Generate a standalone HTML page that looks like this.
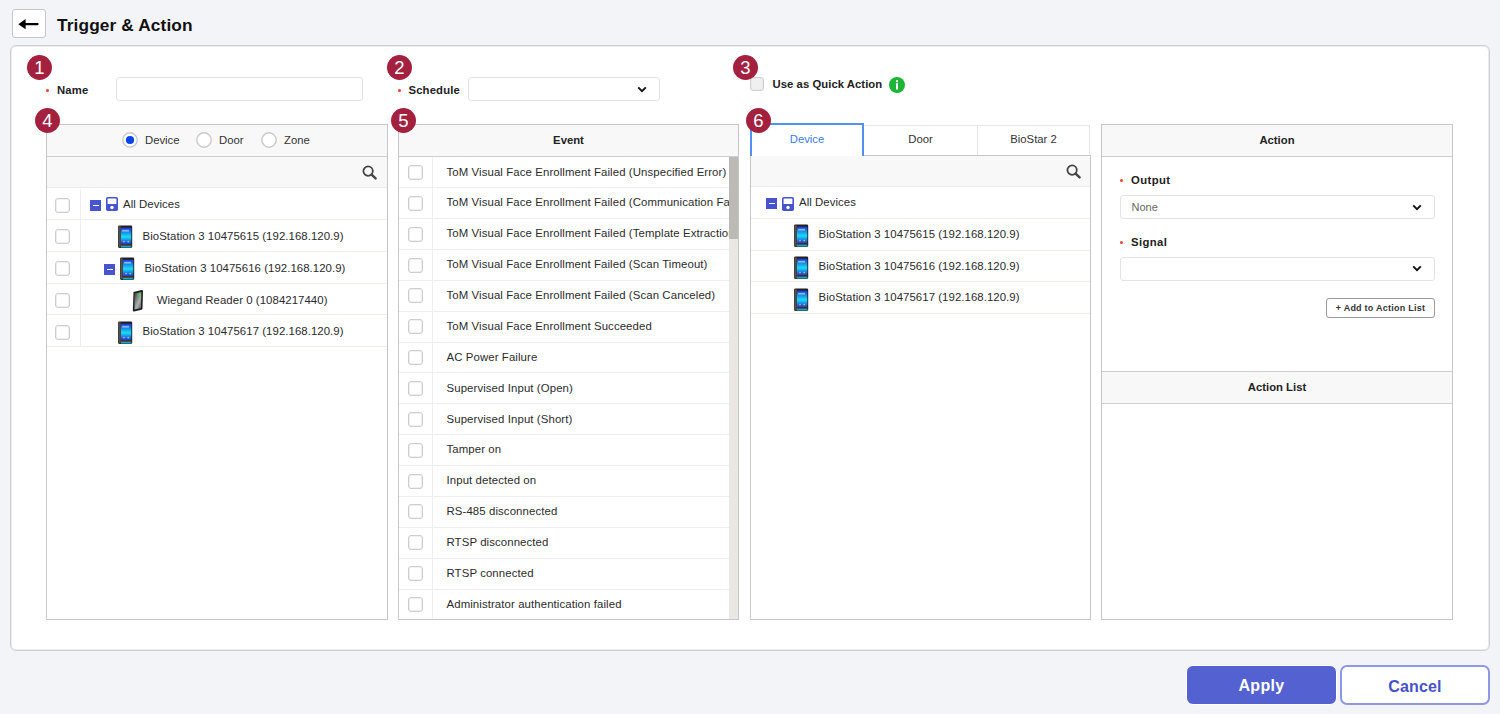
<!DOCTYPE html><html><head><meta charset="utf-8"><style>
*{margin:0;padding:0;box-sizing:border-box}
html,body{width:1500px;height:714px;overflow:hidden;background:#f3f4f8;font-family:"Liberation Sans", sans-serif;position:relative}
div,svg,span{position:absolute}
.back{left:12px;top:9px;width:34px;height:29px;background:#fff;border:1px solid #c6c6c6;border-radius:3px}
.title{left:57px;top:13px;font-size:17.3px;font-weight:bold;color:#111;line-height:24px;white-space:nowrap;letter-spacing:0.12px}
.panel{left:10px;top:45px;width:1480px;height:606px;background:#fff;border:1px solid #cdcdcf;border-radius:6px;box-shadow:inset 0 0 0 1px #ececec}
.num{width:25px;height:25px;border-radius:50%;background:#a3213f;color:#fff;font-size:18.5px;line-height:25.5px;text-align:center;z-index:5}
.dot{width:3px;height:3px;border-radius:50%;background:#f5402c}
.lb{font-size:11.3px;font-weight:bold;color:#222;line-height:20px;white-space:nowrap;letter-spacing:0.15px}
.lb2{font-size:11.3px;font-weight:bold;color:#222;line-height:18px;white-space:nowrap;letter-spacing:0.4px}
.inp{background:#fff;border:1px solid #e3e3e3;border-radius:3px}
.none{left:11px;top:0;line-height:22px;font-size:11px;color:#666;white-space:nowrap}
.cb{width:15px;height:15px;border:1px solid #cdcdcd;border-radius:3px;background:#fff;box-shadow:inset 0 0 0 0.6px #e4e4e4}
.info{width:16px;height:16px;border-radius:50%;background:#1ab83a;color:#fff;font-weight:bold;font-size:11px;line-height:16px;text-align:center}
.box{border:1px solid #c6c6c6;background:#fff}
.hdr{background:#f8f8f8}
.radio{width:15.5px;height:15.5px;border:1.5px solid #c9c9c9;border-radius:50%;background:#fff}
.rdot{left:2.2px;top:2.2px;width:8.2px;height:8.2px;border-radius:50%;background:#0544e6}
.rt{font-size:11.3px;color:#333;line-height:22px;white-space:nowrap}
.row{border-bottom:1px solid #efeee8;background:#fff}
.rowt{font-size:11.4px;color:#2b2b2b;white-space:nowrap;letter-spacing:0.06px}
.vdiv{width:1px;background:#efefef}
.minus{width:11px;height:11px;background:#4753cf}
.minus::after{content:'';position:absolute;left:2.5px;top:5px;width:6px;height:1px;background:#fff}
.ht{font-size:11.3px;font-weight:bold;color:#222;text-align:center;white-space:nowrap}
.erow{left:0;width:330px;border-bottom:1px solid #eeeeee;background:#fff}
.erow span{top:0.2px;font-size:11.4px;color:#2b2b2b;white-space:nowrap;letter-spacing:0.1px}
.tabt{height:31px;line-height:31px;text-align:center;font-size:11.3px;color:#333;white-space:nowrap}
.addbtn{left:1326px;top:298px;width:109px;height:20px;letter-spacing:0.25px;border:1px solid #9a9a9a;border-radius:3px;background:#fff;font-size:9px;font-weight:bold;color:#333;text-align:center;line-height:18px;white-space:nowrap}
.apply{left:1186px;top:665px;width:151px;height:40px;border:1px solid #fff;border-radius:7px;background:#5361d1;color:#fff;font-size:16px;font-weight:bold;text-align:center;line-height:40px;letter-spacing:0.3px}
.cancel{left:1340px;top:665px;width:150px;height:40px;border:2px solid #8e97e4;border-radius:7px;background:#fff;color:#4652c8;font-size:16px;font-weight:bold;text-align:center;line-height:40px;letter-spacing:0.15px}
</style></head><body><div class="back"><svg width="22" height="12" viewBox="0 0 22 12" style="position:absolute;left:4.8px;top:8.8px"><path d="M0.3 5.2 L7.6 0 L7.6 3.9 L19.6 3.9 Q20.6 3.9 20.6 5.1 Q20.6 6.3 19.6 6.3 L7.6 6.3 L7.6 10.2 Z" fill="#000"/></svg></div>
<div class="title">Trigger &amp; Action</div>
<div class="panel"></div>
<div class="dot" style="left:45.5px;top:88.5px"></div>
<div class="lb" style="left:57px;top:80px;">Name</div>
<div class="inp" style="left:116px;top:77px;width:247px;height:24px"></div>
<div class="dot" style="left:398px;top:88.5px"></div>
<div class="lb" style="left:408.5px;top:80px;">Schedule</div>
<div class="inp" style="left:468px;top:77px;width:192px;height:24px"></div>
<svg class="ic" style="left:637px;top:85.8px" width="10" height="7" viewBox="0 0 10 7"><path d="M1.2 1.3 L5 5.2 L8.8 1.3" fill="none" stroke="#111" stroke-width="1.9"/></svg>
<div class="cb" style="left:750px;top:77px;width:14px;height:14px;background:#f0f0f0;border-color:#cfcfcf"></div>
<div class="lb" style="left:772.5px;top:74px;letter-spacing:0.05px">Use as Quick Action</div>
<svg class="ic" style="left:889px;top:76.5px" width="16" height="16" viewBox="0 0 16 16"><circle cx="8" cy="8" r="8" fill="#1cb538"/><rect x="7" y="6.3" width="2" height="6.2" fill="#fff"/><rect x="7" y="3.3" width="2" height="1.9" fill="#fff"/></svg>
<div class="box" style="left:46px;top:124px;width:342px;height:496px"></div>
<div class="hdr" style="left:47px;top:125px;width:340px;height:32px;border-bottom:1px solid #cfcfcf"></div>
<div class="hdr" style="left:47px;top:157px;width:340px;height:31px;border-bottom:1px solid #ebebeb"></div>
<svg class="ic" style="left:122.25px;top:131.75px" width="16" height="16" viewBox="0 0 16 16"><circle cx="8" cy="8" r="7.2" fill="#fff" stroke="#c9c9c9" stroke-width="1.4"/><circle cx="8" cy="8" r="4.1" fill="#0544e6"/></svg>
<div class="rt" style="left:145px;top:129px;">Device</div>
<svg class="ic" style="left:195.75px;top:131.75px" width="16" height="16" viewBox="0 0 16 16"><circle cx="8" cy="8" r="7.2" fill="#fff" stroke="#c9c9c9" stroke-width="1.4"/></svg>
<div class="rt" style="left:219px;top:129px;">Door</div>
<svg class="ic" style="left:261.25px;top:131.75px" width="16" height="16" viewBox="0 0 16 16"><circle cx="8" cy="8" r="7.2" fill="#fff" stroke="#c9c9c9" stroke-width="1.4"/></svg>
<div class="rt" style="left:284px;top:129px;">Zone</div>
<svg class="ic" style="left:361.5px;top:164.5px" width="16" height="16" viewBox="0 0 16 16"><circle cx="6.1" cy="6.1" r="4.7" fill="none" stroke="#444" stroke-width="1.8"/><line x1="9.6" y1="9.6" x2="13.6" y2="13.4" stroke="#444" stroke-width="2.4" stroke-linecap="round"/></svg>
<div class="row" style="left:47px;top:189.40px;width:340px;height:30.75px"></div>
<div class="cb" style="left:55px;top:197.6px;background:#fff"></div>
<div class="minus" style="left:90px;top:200px"></div>
<svg class="ic" style="left:105.8px;top:197.2px" width="12" height="14" viewBox="0 0 12 14"><rect x="0" y="0" width="12" height="14" rx="1.8" fill="#4753cf"/><rect x="1.6" y="1.6" width="8.8" height="5.4" rx="0.3" fill="#fff"/><circle cx="6" cy="10.5" r="1.7" fill="#fff"/></svg>
<div class="rowt" style="left:123px;top:189.4px;line-height:30.75px">All Devices</div>
<div class="row" style="left:47px;top:221.15px;width:340px;height:30.75px"></div>
<div class="cb" style="left:55px;top:229.3px;background:#fff"></div>
<svg class="ic" style="left:118px;top:225.25px" width="15" height="24" viewBox="0 0 15 24"><defs><linearGradient id="scr" x1="0" y1="0" x2="0" y2="1"><stop offset="0" stop-color="#1836d8"/><stop offset="0.55" stop-color="#17dcf8"/><stop offset="1" stop-color="#1a30d0"/></linearGradient></defs><rect x="0" y="0.4" width="14.2" height="22.6" rx="1.4" fill="#241f1b"/><rect x="0.3" y="1.2" width="2.4" height="21" fill="#57504a"/><rect x="2.9" y="2.6" width="10.4" height="16.8" fill="url(#scr)"/><rect x="4.2" y="4.8" width="6.8" height="1.8" fill="#a8d4ff" opacity="0.75"/><circle cx="6" cy="16.6" r="0.95" fill="#f27ae4"/><circle cx="10.3" cy="16.6" r="0.95" fill="#80e040"/><rect x="2.9" y="19.4" width="10.4" height="1.2" fill="#6a2c18"/><rect x="2.9" y="20.6" width="10.4" height="2" fill="#17a8b8"/></svg>
<div class="rowt" style="left:142.5px;top:221.15px;line-height:30.75px">BioStation 3 10475615 (192.168.120.9)</div>
<div class="row" style="left:47px;top:252.90px;width:340px;height:30.75px"></div>
<div class="cb" style="left:55px;top:261.1px;background:#fff"></div>
<div class="minus" style="left:104px;top:263.5px"></div>
<svg class="ic" style="left:119.6px;top:257.0px" width="15" height="24" viewBox="0 0 15 24"><defs><linearGradient id="scr" x1="0" y1="0" x2="0" y2="1"><stop offset="0" stop-color="#1836d8"/><stop offset="0.55" stop-color="#17dcf8"/><stop offset="1" stop-color="#1a30d0"/></linearGradient></defs><rect x="0" y="0.4" width="14.2" height="22.6" rx="1.4" fill="#241f1b"/><rect x="0.3" y="1.2" width="2.4" height="21" fill="#57504a"/><rect x="2.9" y="2.6" width="10.4" height="16.8" fill="url(#scr)"/><rect x="4.2" y="4.8" width="6.8" height="1.8" fill="#a8d4ff" opacity="0.75"/><circle cx="6" cy="16.6" r="0.95" fill="#f27ae4"/><circle cx="10.3" cy="16.6" r="0.95" fill="#80e040"/><rect x="2.9" y="19.4" width="10.4" height="1.2" fill="#6a2c18"/><rect x="2.9" y="20.6" width="10.4" height="2" fill="#17a8b8"/></svg>
<div class="rowt" style="left:144.4px;top:252.9px;line-height:30.75px">BioStation 3 10475616 (192.168.120.9)</div>
<div class="row" style="left:47px;top:284.65px;width:340px;height:30.75px"></div>
<div class="cb" style="left:55px;top:292.8px;background:#fff"></div>
<svg class="ic" style="left:131.5px;top:288.65px" width="12" height="23" viewBox="0 0 12 23"><defs><linearGradient id="wg" x1="0" y1="0" x2="1" y2="1"><stop offset="0" stop-color="#3a3a3a"/><stop offset="0.6" stop-color="#aab2b2"/><stop offset="1" stop-color="#555"/></linearGradient></defs><path d="M1.5 3 L9.5 1 Q11 0.8 11 2 L10.5 19.5 Q10.5 20.5 9.5 20.8 L2 22.5 Q0.8 22.7 0.8 21.5 Z" fill="#1e1e1e"/><path d="M2.6 4.5 L9.3 3 L9 19 L2.4 20.6 Z" fill="url(#wg)"/><circle cx="7.4" cy="5.8" r="1.3" fill="#2ee82e"/></svg>
<div class="rowt" style="left:156.7px;top:284.65px;line-height:30.75px">Wiegand Reader 0 (1084217440)</div>
<div class="row" style="left:47px;top:316.40px;width:340px;height:30.75px"></div>
<div class="cb" style="left:55px;top:324.6px;background:#fff"></div>
<svg class="ic" style="left:117.8px;top:320.5px" width="15" height="24" viewBox="0 0 15 24"><defs><linearGradient id="scr" x1="0" y1="0" x2="0" y2="1"><stop offset="0" stop-color="#1836d8"/><stop offset="0.55" stop-color="#17dcf8"/><stop offset="1" stop-color="#1a30d0"/></linearGradient></defs><rect x="0" y="0.4" width="14.2" height="22.6" rx="1.4" fill="#241f1b"/><rect x="0.3" y="1.2" width="2.4" height="21" fill="#57504a"/><rect x="2.9" y="2.6" width="10.4" height="16.8" fill="url(#scr)"/><rect x="4.2" y="4.8" width="6.8" height="1.8" fill="#a8d4ff" opacity="0.75"/><circle cx="6" cy="16.6" r="0.95" fill="#f27ae4"/><circle cx="10.3" cy="16.6" r="0.95" fill="#80e040"/><rect x="2.9" y="19.4" width="10.4" height="1.2" fill="#6a2c18"/><rect x="2.9" y="20.6" width="10.4" height="2" fill="#17a8b8"/></svg>
<div class="rowt" style="left:142.5px;top:316.4px;line-height:30.75px">BioStation 3 10475617 (192.168.120.9)</div>
<div class="vdiv" style="left:80px;top:189px;height:157px"></div>
<div class="box" style="left:398px;top:124px;width:341px;height:496px"></div>
<div class="hdr" style="left:399px;top:125px;width:339px;height:32px;border-bottom:1px solid #cfcfcf"></div>
<div class="ht" style="left:399px;top:125px;width:339px;line-height:31px">Event</div>
<div style="position:absolute;left:399px;top:157px;width:330px;height:462px;overflow:hidden">
<div class="erow" style="top:0.40px;height:30.87px;line-height:29.87px"><div class="cb" style="left:9px;top:7.5px"></div><span style="left:47.5px">ToM Visual Face Enrollment Failed (Unspecified Error)</span></div>
<div class="erow" style="top:31.27px;height:30.87px;line-height:29.87px"><div class="cb" style="left:9px;top:7.5px"></div><span style="left:47.5px">ToM Visual Face Enrollment Failed (Communication Failure)</span></div>
<div class="erow" style="top:62.14px;height:30.87px;line-height:29.87px"><div class="cb" style="left:9px;top:7.5px"></div><span style="left:47.5px">ToM Visual Face Enrollment Failed (Template Extraction Failure)</span></div>
<div class="erow" style="top:93.01px;height:30.87px;line-height:29.87px"><div class="cb" style="left:9px;top:7.5px"></div><span style="left:47.5px">ToM Visual Face Enrollment Failed (Scan Timeout)</span></div>
<div class="erow" style="top:123.88px;height:30.87px;line-height:29.87px"><div class="cb" style="left:9px;top:7.5px"></div><span style="left:47.5px">ToM Visual Face Enrollment Failed (Scan Canceled)</span></div>
<div class="erow" style="top:154.75px;height:30.87px;line-height:29.87px"><div class="cb" style="left:9px;top:7.5px"></div><span style="left:47.5px">ToM Visual Face Enrollment Succeeded</span></div>
<div class="erow" style="top:185.62px;height:30.87px;line-height:29.87px"><div class="cb" style="left:9px;top:7.5px"></div><span style="left:47.5px">AC Power Failure</span></div>
<div class="erow" style="top:216.49px;height:30.87px;line-height:29.87px"><div class="cb" style="left:9px;top:7.5px"></div><span style="left:47.5px">Supervised Input (Open)</span></div>
<div class="erow" style="top:247.36px;height:30.87px;line-height:29.87px"><div class="cb" style="left:9px;top:7.5px"></div><span style="left:47.5px">Supervised Input (Short)</span></div>
<div class="erow" style="top:278.23px;height:30.87px;line-height:29.87px"><div class="cb" style="left:9px;top:7.5px"></div><span style="left:47.5px">Tamper on</span></div>
<div class="erow" style="top:309.10px;height:30.87px;line-height:29.87px"><div class="cb" style="left:9px;top:7.5px"></div><span style="left:47.5px">Input detected on</span></div>
<div class="erow" style="top:339.97px;height:30.87px;line-height:29.87px"><div class="cb" style="left:9px;top:7.5px"></div><span style="left:47.5px">RS-485 disconnected</span></div>
<div class="erow" style="top:370.84px;height:30.87px;line-height:29.87px"><div class="cb" style="left:9px;top:7.5px"></div><span style="left:47.5px">RTSP disconnected</span></div>
<div class="erow" style="top:401.71px;height:30.87px;line-height:29.87px"><div class="cb" style="left:9px;top:7.5px"></div><span style="left:47.5px">RTSP connected</span></div>
<div class="erow" style="top:432.58px;height:30.87px;line-height:29.87px"><div class="cb" style="left:9px;top:7.5px"></div><span style="left:47.5px">Administrator authentication failed</span></div>
</div>
<div class="vdiv" style="left:432px;top:157px;height:462px"></div>
<div style="position:absolute;left:729px;top:157px;width:9px;height:462px;background:#ebe7e5"></div>
<div style="position:absolute;left:729px;top:157px;width:9px;height:82px;background:#bcb9b6"></div>
<div class="box" style="left:750px;top:155px;width:341px;height:465px"></div>
<div style="position:absolute;left:863px;top:125px;width:227px;height:31px;background:#fff;border-top:1px solid #e6e6e6;border-right:1px solid #e6e6e6;border-bottom:1px solid #c6c6c6"></div>
<div style="position:absolute;left:977px;top:126px;width:1px;height:29px;background:#e6e6e6"></div>
<div style="position:absolute;left:750px;top:123px;width:114px;height:33px;background:#fff;border:2px solid #5390f4;border-bottom:none"></div>
<div class="tabt" style="left:751px;top:124px;width:112px;color:#3b7de8">Device</div>
<div class="tabt" style="left:864px;top:124px;width:113px">Door</div>
<div class="tabt" style="left:978px;top:124px;width:111px">BioStar 2</div>
<div class="hdr" style="left:751px;top:156px;width:339px;height:31px;border-bottom:1px solid #ebebeb"></div>
<svg class="ic" style="left:1065.5px;top:163.5px" width="16" height="16" viewBox="0 0 16 16"><circle cx="6.1" cy="6.1" r="4.7" fill="none" stroke="#444" stroke-width="1.8"/><line x1="9.6" y1="9.6" x2="13.6" y2="13.4" stroke="#444" stroke-width="2.4" stroke-linecap="round"/></svg>
<div class="row" style="left:751px;top:188.00px;width:339px;height:30.75px"></div>
<div class="minus" style="left:766px;top:197.5px"></div>
<svg class="ic" style="left:782px;top:197px" width="12" height="14" viewBox="0 0 12 14"><rect x="0" y="0" width="12" height="14" rx="1.8" fill="#4753cf"/><rect x="1.6" y="1.6" width="8.8" height="5.4" rx="0.3" fill="#fff"/><circle cx="6" cy="10.5" r="1.7" fill="#fff"/></svg>
<div class="rowt" style="left:799px;top:187.0px;line-height:30.75px">All Devices</div>
<div class="row" style="left:751px;top:219.75px;width:339px;height:30.75px"></div>
<svg class="ic" style="left:794px;top:224.45px" width="15" height="24" viewBox="0 0 15 24"><defs><linearGradient id="scr" x1="0" y1="0" x2="0" y2="1"><stop offset="0" stop-color="#1836d8"/><stop offset="0.55" stop-color="#17dcf8"/><stop offset="1" stop-color="#1a30d0"/></linearGradient></defs><rect x="0" y="0.4" width="14.2" height="22.6" rx="1.4" fill="#241f1b"/><rect x="0.3" y="1.2" width="2.4" height="21" fill="#57504a"/><rect x="2.9" y="2.6" width="10.4" height="16.8" fill="url(#scr)"/><rect x="4.2" y="4.8" width="6.8" height="1.8" fill="#a8d4ff" opacity="0.75"/><circle cx="6" cy="16.6" r="0.95" fill="#f27ae4"/><circle cx="10.3" cy="16.6" r="0.95" fill="#80e040"/><rect x="2.9" y="19.4" width="10.4" height="1.2" fill="#6a2c18"/><rect x="2.9" y="20.6" width="10.4" height="2" fill="#17a8b8"/></svg>
<div class="rowt" style="left:818.5px;top:218.75px;line-height:30.75px">BioStation 3 10475615 (192.168.120.9)</div>
<div class="row" style="left:751px;top:251.50px;width:339px;height:30.75px"></div>
<svg class="ic" style="left:794px;top:256.2px" width="15" height="24" viewBox="0 0 15 24"><defs><linearGradient id="scr" x1="0" y1="0" x2="0" y2="1"><stop offset="0" stop-color="#1836d8"/><stop offset="0.55" stop-color="#17dcf8"/><stop offset="1" stop-color="#1a30d0"/></linearGradient></defs><rect x="0" y="0.4" width="14.2" height="22.6" rx="1.4" fill="#241f1b"/><rect x="0.3" y="1.2" width="2.4" height="21" fill="#57504a"/><rect x="2.9" y="2.6" width="10.4" height="16.8" fill="url(#scr)"/><rect x="4.2" y="4.8" width="6.8" height="1.8" fill="#a8d4ff" opacity="0.75"/><circle cx="6" cy="16.6" r="0.95" fill="#f27ae4"/><circle cx="10.3" cy="16.6" r="0.95" fill="#80e040"/><rect x="2.9" y="19.4" width="10.4" height="1.2" fill="#6a2c18"/><rect x="2.9" y="20.6" width="10.4" height="2" fill="#17a8b8"/></svg>
<div class="rowt" style="left:818.5px;top:250.5px;line-height:30.75px">BioStation 3 10475616 (192.168.120.9)</div>
<div class="row" style="left:751px;top:283.25px;width:339px;height:30.75px"></div>
<svg class="ic" style="left:794px;top:287.95px" width="15" height="24" viewBox="0 0 15 24"><defs><linearGradient id="scr" x1="0" y1="0" x2="0" y2="1"><stop offset="0" stop-color="#1836d8"/><stop offset="0.55" stop-color="#17dcf8"/><stop offset="1" stop-color="#1a30d0"/></linearGradient></defs><rect x="0" y="0.4" width="14.2" height="22.6" rx="1.4" fill="#241f1b"/><rect x="0.3" y="1.2" width="2.4" height="21" fill="#57504a"/><rect x="2.9" y="2.6" width="10.4" height="16.8" fill="url(#scr)"/><rect x="4.2" y="4.8" width="6.8" height="1.8" fill="#a8d4ff" opacity="0.75"/><circle cx="6" cy="16.6" r="0.95" fill="#f27ae4"/><circle cx="10.3" cy="16.6" r="0.95" fill="#80e040"/><rect x="2.9" y="19.4" width="10.4" height="1.2" fill="#6a2c18"/><rect x="2.9" y="20.6" width="10.4" height="2" fill="#17a8b8"/></svg>
<div class="rowt" style="left:818.5px;top:282.25px;line-height:30.75px">BioStation 3 10475617 (192.168.120.9)</div>
<div class="box" style="left:1101px;top:124px;width:352px;height:496px"></div>
<div class="hdr" style="left:1102px;top:125px;width:350px;height:32px;border-bottom:1px solid #cfcfcf"></div>
<div class="ht" style="left:1102px;top:125px;width:350px;line-height:31px">Action</div>
<div class="dot" style="left:1119.5px;top:179px"></div>
<div class="lb2" style="left:1131px;top:171px;">Output</div>
<div class="inp" style="left:1119.5px;top:195px;width:315px;height:24px"><span class="none">None</span></div>
<svg class="ic" style="left:1412px;top:203.5px" width="10" height="7" viewBox="0 0 10 7"><path d="M1.2 1.3 L5 5.2 L8.8 1.3" fill="none" stroke="#111" stroke-width="1.9"/></svg>
<div class="dot" style="left:1119.5px;top:241px"></div>
<div class="lb2" style="left:1131px;top:233px;">Signal</div>
<div class="inp" style="left:1119.5px;top:256.5px;width:315px;height:24px"></div>
<svg class="ic" style="left:1412px;top:265px" width="10" height="7" viewBox="0 0 10 7"><path d="M1.2 1.3 L5 5.2 L8.8 1.3" fill="none" stroke="#111" stroke-width="1.9"/></svg>
<div class="addbtn">+ Add to Action List</div>
<div class="hdr" style="left:1102px;top:371px;width:350px;height:33px;border-top:1px solid #cfcfcf;border-bottom:1px solid #cfcfcf"></div>
<div class="ht" style="left:1102px;top:372px;width:350px;line-height:31px">Action List</div>
<div class="apply">Apply</div>
<div class="cancel">Cancel</div>
<div class="num" style="left:27px;top:55px">1</div>
<div class="num" style="left:387px;top:55px">2</div>
<div class="num" style="left:733px;top:55px">3</div>
<div class="num" style="left:35px;top:108px">4</div>
<div class="num" style="left:391px;top:108px">5</div>
<div class="num" style="left:746px;top:108px">6</div></body></html>
